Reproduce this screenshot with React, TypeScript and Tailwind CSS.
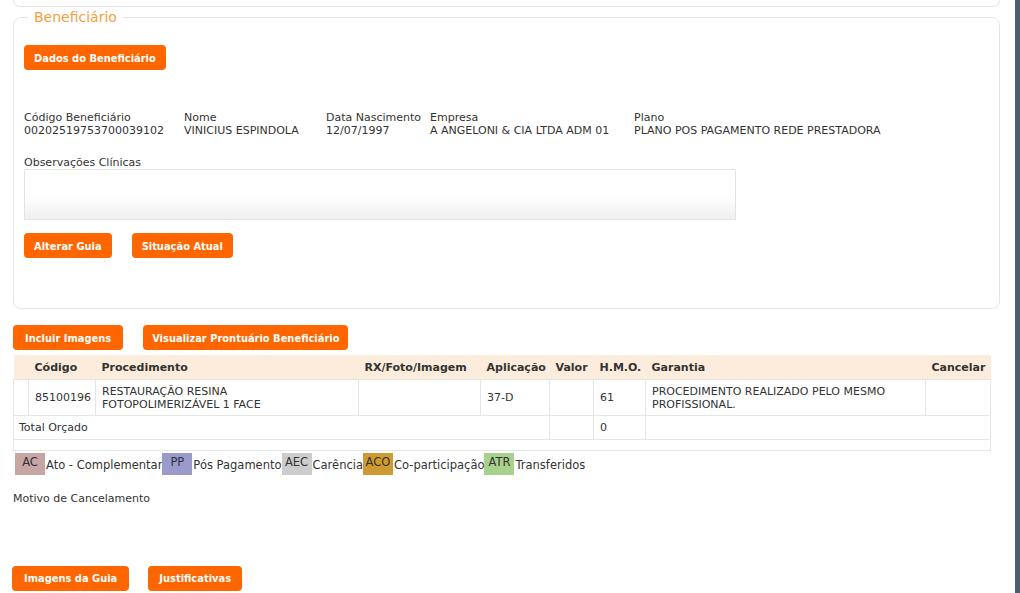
const font = "font-['DejaVu_Sans','Verdana',sans-serif]";
const btnFont = "font-['DejaVu_Sans_Condensed','DejaVu_Sans',sans-serif]";

function Btn({ children, className = "px-[10px]" }: { children: React.ReactNode; className?: string }) {
  return (
    <button
      className={`h-[25px] rounded-[4px] bg-[#ff6600] pt-[1px] text-[11px] font-bold text-white ${btnFont} ${className}`}
    >
      {children}
    </button>
  );
}

const legend = [
  { code: "AC", label: "Ato - Complementar", bg: "bg-[#c8a5a5]" },
  { code: "PP", label: "Pós Pagamento", bg: "bg-[#9a9acd]" },
  { code: "AEC", label: "Carência", bg: "bg-[#cccccc]" },
  { code: "ACO", label: "Co-participação", bg: "bg-[#cf9a32]" },
  { code: "ATR", label: "Transferidos", bg: "bg-[#a9d18e]" },
];

const info = [
  { label: "Código Beneficiário", value: "00202519753700039102", w: "w-[160px]" },
  { label: "Nome", value: "VINICIUS ESPINDOLA", w: "w-[142px]" },
  { label: "Data Nascimento", value: "12/07/1997", w: "w-[104px]" },
  { label: "Empresa", value: "A ANGELONI & CIA LTDA ADM 01", w: "w-[204px]" },
  { label: "Plano", value: "PLANO POS PAGAMENTO REDE PRESTADORA", w: "" },
];

export default function App() {
  return (
    <div className={`flex h-[593px] w-[1020px] overflow-hidden bg-white text-[11px] leading-[13px] text-[#333] ${font}`}>
      <div className="w-[1015px]">
        {/* top card tail */}
        <div className="ml-[13px] h-[7px] w-[987px] rounded-b-[8px] border border-t-0 border-[#e6e6e6]" />

        <fieldset className="ml-[13px] mt-[1px] w-[987px] rounded-[8px] border border-[#e6e6e6] px-[10px] pb-[50px]">
          <legend className="ml-[4px] px-[6px] text-[14px] leading-[18px] text-[#f5a03a]">Beneficiário</legend>

          <Btn className="mt-[19px] px-[10px]">Dados do Beneficiário</Btn>

          <div className="mt-[41px] flex">
            {info.map((i) => (
              <div key={i.label} className={i.w}>
                <div>{i.label}</div>
                <div>{i.value}</div>
              </div>
            ))}
          </div>

          <div className="mt-[19px]">Observações Clínicas</div>
          <div className="h-[51px] w-[712px] border border-[#e3e3e3] bg-gradient-to-b from-white from-50% to-[#f0f0f0]" />

          <div className="mt-[13px] flex gap-[20px]">
            <Btn>Alterar Guia</Btn>
            <Btn>Situação Atual</Btn>
          </div>
        </fieldset>

        <div className="ml-[13px] mt-[16px] flex gap-[20px]">
          <Btn className="px-[12px]">Incluir Imagens</Btn>
          <Btn className="px-[9px]">Visualizar Prontuário Beneficiário</Btn>
        </div>

        <table className="ml-[13px] mt-[5px] w-[977px] table-fixed border-collapse">
          <colgroup>
            <col className="w-[15px]" />
            <col className="w-[67px]" />
            <col className="w-[263px]" />
            <col className="w-[122px]" />
            <col className="w-[69px]" />
            <col className="w-[44px]" />
            <col className="w-[52px]" />
            <col className="w-[280px]" />
            <col className="w-[65px]" />
          </colgroup>
          <thead>
            <tr className="h-[24px] border-b border-[#f2a672] bg-[#fcecdc] text-left font-bold [&>th]:pt-[2px]">
              <th />
              <th className="px-[6px]">Código</th>
              <th className="px-[6px]">Procedimento</th>
              <th className="px-[6px]">RX/Foto/Imagem</th>
              <th className="px-[6px]">Aplicação</th>
              <th className="px-[6px]">Valor</th>
              <th className="px-[6px]">H.M.O.</th>
              <th className="px-[6px]">Garantia</th>
              <th className="px-[6px]">Cancelar</th>
            </tr>
          </thead>
          <tbody>
            <tr className="h-[36px] [&>td]:border [&>td]:border-[#e6e6e6] [&>td]:px-[6px] [&>td]:pt-[1px]">
              <td />
              <td>85100196</td>
              <td>
                RESTAURAÇÃO RESINA
                <br />
                FOTOPOLIMERIZÁVEL 1 FACE
              </td>
              <td />
              <td>37-D</td>
              <td />
              <td>61</td>
              <td>PROCEDIMENTO REALIZADO PELO MESMO PROFISSIONAL.</td>
              <td />
            </tr>
            <tr className="h-[24px] [&>td]:border [&>td]:border-[#e6e6e6] [&>td]:px-[6px]">
              <td colSpan={5} className="!px-[5px]">Total Orçado</td>
              <td />
              <td>0</td>
              <td colSpan={2} />
            </tr>
            <tr className="h-[11px] [&>td]:border [&>td]:border-[#e6e6e6]">
              <td colSpan={9} />
            </tr>
          </tbody>
        </table>

        <div className="ml-[15px] mt-[2px] flex items-stretch text-[11.5px]">
          {legend.map((l) => (
            <div key={l.code} className="flex items-start">
              <span className={`h-[22px] w-[30px] pt-[3px] text-center ${l.bg}`}>{l.code}</span>
              <span className="ml-[1px] pt-[6px]">{l.label}</span>
            </div>
          ))}
        </div>

        <div className="ml-[13px] mt-[17px]">Motivo de Cancelamento</div>

        <div className="ml-[12px] mt-[61px] flex gap-[19px]">
          <Btn className="px-[12px]">Imagens da Guia</Btn>
          <Btn className="px-[11px]">Justificativas</Btn>
        </div>
      </div>
      <div className="w-[5px] bg-[#4b5e70]" />
    </div>
  );
}
